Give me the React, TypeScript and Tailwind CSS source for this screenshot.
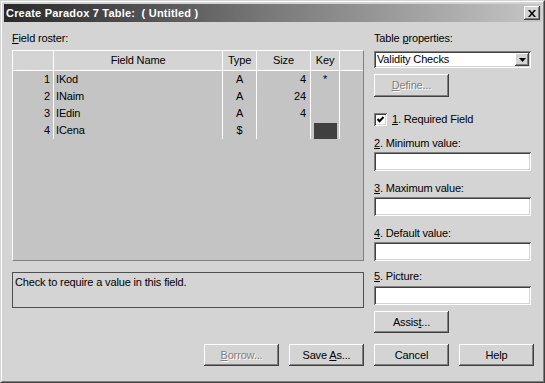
import React from "react";

const raised =
  "shadow-[inset_-1px_-1px_#404040,inset_1px_1px_#ffffff,inset_-2px_-2px_#808080,inset_2px_2px_#d4d4d4]";
const sunken =
  "shadow-[inset_1px_1px_#808080,inset_-1px_-1px_#ffffff,inset_2px_2px_#404040,inset_-2px_-2px_#d4d4d4]";

const U = ({ children }: { children: React.ReactNode }) => (
  <span className="underline underline-offset-[1px] decoration-1">{children}</span>
);

const Btn = ({ children, disabled, className = "" }: { children: React.ReactNode; disabled?: boolean; className?: string }) => (
  <div
    className={`flex items-center justify-center bg-[#d4d4d4] ${raised} ${className} ${
      disabled ? "text-[#808080] [text-shadow:1px_1px_0_#ffffff]" : "text-black"
    }`}
  >
    {children}
  </div>
);

const Input = () => <div className={`h-[19px] w-full bg-white ${sunken}`} />;

const cols = [
  { w: "w-[41px]", title: "" },
  { w: "w-[169px]", title: "Field Name" },
  { w: "w-[34px]", title: "Type" },
  { w: "w-[54px]", title: "Size" },
  { w: "w-[29px]", title: "Key" },
];

const rows = [
  { n: "1", name: "IKod", type: "A", size: "4", key: "*" },
  { n: "2", name: "INaim", type: "A", size: "24", key: "" },
  { n: "3", name: "IEdin", type: "A", size: "4", key: "" },
  { n: "4", name: "ICena", type: "$", size: "", key: "" },
];

export default function App() {
  return (
    <div className="w-[545px] h-[383px] bg-[#d4d4d4] border-t border-l border-[#d4d4d4] border-r border-b border-r-[#404040] border-b-[#404040] text-[11px] leading-[13px] tracking-[-0.15px] text-black [font-family:'Liberation_Sans',Arial,sans-serif]">
      <div className="h-full border-t border-l border-white border-r border-b border-r-[#808080] border-b-[#808080] p-[2px] flex flex-col">
        {/* title bar */}
        <div className="h-[18px] flex items-center justify-between bg-gradient-to-r from-[#2a2a2a] via-[#7a7a7a] to-[#c6c6c6] pl-[2px] pr-[1px]">
          <span className="text-white font-bold text-[11px] tracking-[0.2px] whitespace-pre">Create Paradox 7 Table:  ( Untitled )</span>
          <div className={`w-[16px] h-[14px] bg-[#d4d4d4] flex items-center justify-center ${raised}`}>
            <svg width="8" height="7" viewBox="0 0 8 7">
              <path d="M0 0h2l2 2.5L6 0h2L5 3.5 8 7H6L4 4.5 2 7H0l3-3.5z" fill="#000" />
            </svg>
          </div>
        </div>

        <div className="flex pl-[8px] pt-[10px] gap-[10px]">
          {/* left */}
          <div className="w-[352px] flex flex-col">
            <div className="h-[13px]"><U>F</U>ield roster:</div>
            <div className="mt-[5px] h-[211px] bg-[#c4c4c4] border-t border-l border-white border-r border-b border-r-[#808080] border-b-[#808080] flex flex-col">
              <div className="h-[20px] bg-[#d4d4d4] border-b border-white flex">
                {cols.map((c, i) => (
                  <div key={i} className={`${c.w} h-full border-r border-white flex items-center justify-center`}>
                    {c.title}
                  </div>
                ))}
              </div>
              <div className="flex">
                <div className={`${cols[0].w} border-r border-white`}>
                  {rows.map((r) => (
                    <div key={r.n} className="h-[17px] flex items-center justify-end pr-[3px]">{r.n}</div>
                  ))}
                </div>
                <div className={`${cols[1].w} border-r border-white`}>
                  {rows.map((r) => (
                    <div key={r.n} className="h-[17px] flex items-center pl-[2px]">{r.name}</div>
                  ))}
                </div>
                <div className={`${cols[2].w} border-r border-white`}>
                  {rows.map((r) => (
                    <div key={r.n} className="h-[17px] flex items-center justify-center">{r.type}</div>
                  ))}
                </div>
                <div className={`${cols[3].w} border-r border-white`}>
                  {rows.map((r) => (
                    <div key={r.n} className="h-[17px] flex items-center justify-end pr-[4px]">{r.size}</div>
                  ))}
                </div>
                <div className={`${cols[4].w} border-r border-white`}>
                  {rows.map((r, i) => (
                    <div key={r.n} className="h-[17px] flex items-center justify-center">
                      {i === 3 ? <div className="w-[23px] h-[16px] bg-[#404040]" /> : r.key}
                    </div>
                  ))}
                </div>
              </div>
            </div>
            <div className="mt-[11px] h-[36px] border border-[#505050] px-[2px] pt-[3px]">
              Check to require a value in this field.
            </div>
          </div>

          {/* right */}
          <div className="w-[157px] flex flex-col">
            <div className="h-[13px]">Table <U>p</U>roperties:</div>
            <div className={`mt-[6px] h-[17px] bg-white flex items-center justify-between pl-[3px] pr-[2px] ${sunken}`}>
              <span>Validity Checks</span>
              <div className={`w-[14px] h-[13px] bg-[#d4d4d4] flex items-center justify-center ${raised}`}>
                <svg width="7" height="4" viewBox="0 0 7 4">
                  <path d="M0 0h7L3.5 4z" fill="#000" />
                </svg>
              </div>
            </div>
            <Btn disabled className="mt-[6px] w-[75px] h-[23px]">
              <span><U>D</U>efine...</span>
            </Btn>
            <div className="mt-[16px] flex items-center gap-[5px]">
              <div className={`w-[13px] h-[13px] bg-white flex items-center justify-center ${sunken}`}>
                <svg width="7" height="7" viewBox="0 0 7 7">
                  <polyline points="0.5,3 2.5,5.2 6.5,1" fill="none" stroke="#000" strokeWidth="2" />
                </svg>
              </div>
              <span><U>1</U>. Required Field</span>
            </div>
            <div className="mt-[11px] h-[13px]"><U>2</U>. Minimum value:</div>
            <div className="mt-[2px]"><Input /></div>
            <div className="mt-[11px] h-[13px]"><U>3</U>. Maximum value:</div>
            <div className="mt-[2px]"><Input /></div>
            <div className="mt-[11px] h-[13px]"><U>4</U>. Default value:</div>
            <div className="mt-[2px]"><Input /></div>
            <div className="mt-[9px] h-[13px]"><U>5</U>. Picture:</div>
            <div className="mt-[3px]"><Input /></div>
            <Btn className="mt-[6px] w-[75px] h-[22px]">
              <span>Assis<U>t</U>...</span>
            </Btn>
          </div>
        </div>

        <div className="mt-[11px] flex justify-end gap-[10px] pr-[7px]">
          <Btn disabled className="w-[75px] h-[22px]"><span><U>B</U>orrow...</span></Btn>
          <Btn className="w-[75px] h-[22px]"><span>Save <U>A</U>s...</span></Btn>
          <Btn className="w-[75px] h-[22px]">Cancel</Btn>
          <Btn className="w-[75px] h-[22px]">Help</Btn>
        </div>
      </div>
    </div>
  );
}
